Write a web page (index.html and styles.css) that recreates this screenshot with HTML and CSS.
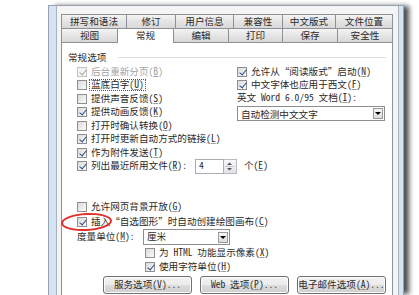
FILE: index.html
```html
<!DOCTYPE html>
<html lang="zh-CN">
<head>
<meta charset="utf-8">
<title>选项</title>
<link rel="stylesheet" href="styles.css">
</head>
<body>
<div class="dialog">
  <div class="body">
    <div class="tabs">
      <div class="tabrow r1">
        <div class="tab">拼写和语法</div>
        <div class="tab">修订</div>
        <div class="tab">用户信息</div>
        <div class="tab">兼容性</div>
        <div class="tab">中文版式</div>
        <div class="tab">文件位置</div>
      </div>
      <div class="tabrow r2">
        <div class="tab">视图</div>
        <div class="tab sel">常规</div>
        <div class="tab">编辑</div>
        <div class="tab">打印</div>
        <div class="tab">保存</div>
        <div class="tab">安全性</div>
      </div>
    </div>
    <div class="panel">
      <div class="group-head"><span>常规选项</span><span class="line"></span></div>
      <div class="opts">
        <div class="col">
          <div class="row"><span class="cb dis on"></span><span class="dis-text">后台重新分页(<u>B</u>)</span></div>
          <div class="row"><span class="cb"></span><span class="focus">蓝底白字(<u>U</u>)</span></div>
          <div class="row"><span class="cb"></span><span>提供声音反馈(<u>S</u>)</span></div>
          <div class="row"><span class="cb on"></span><span>提供动画反馈(<u>K</u>)</span></div>
          <div class="row"><span class="cb"></span><span>打开时确认转换(<u>O</u>)</span></div>
          <div class="row"><span class="cb on"></span><span>打开时更新自动方式的链接(<u>L</u>)</span></div>
          <div class="row"><span class="cb on"></span><span>作为附件发送(<u>T</u>)</span></div>
          <div class="row"><span class="cb on"></span><span>列出最近所用文件(<u>R</u>):</span>
            <span class="spin"><span class="spin-val">4</span><span class="spin-btn"><svg width="11" height="13" viewBox="0 0 11 13"><path d="M3 5 L5.5 2.5 L8 5 Z" fill="#4b5563"/><path d="M3 8 L5.5 10.5 L8 8 Z" fill="#4b5563"/><line x1="1" y1="6.5" x2="10" y2="6.5" stroke="#c9ccd1"/></svg></span></span>
            <span class="unit">个(<u>E</u>)</span>
          </div>
        </div>
        <div class="col">
          <div class="row rr"><span class="cb on"></span><span>允许从“阅读版式”启动(<u>N</u>)</span></div>
          <div class="row rr"><span class="cb on"></span><span>中文字体也应用于西文(<u>F</u>)</span></div>
          <div class="row rr"><span>英文 Word 6.0/95 文档(<u>I</u>):</span></div>
          <div class="select sel-wide"><span>自动检测中文文字</span><span class="arrow"></span></div>
        </div>
      </div>
      <div class="lower">
        <div class="row lr"><span class="cb"></span><span>允许网页背景开放(<u>G</u>)</span></div>
        <div class="row lr mark"><span class="cb on"></span><span>插入“自选图形”时自动创建绘图画布(<u>C</u>)</span><span class="ellipse"></span></div>
        <div class="row unit-row"><span class="unit-label">度量单位(<u>M</u>):</span><span class="select sel-unit"><span>厘米</span><span class="arrow"></span></span></div>
        <div class="row lr sub"><span class="cb"></span><span>为 HTML 功能显示像素(<u>X</u>)</span></div>
        <div class="row lr sub last"><span class="cb on"></span><span>使用字符单位(<u>H</u>)</span></div>
        <div class="buttons">
          <div class="btn">服务选项(<u>V</u>)...</div>
          <div class="btn">Web 选项(<u>P</u>)...</div>
          <div class="btn">电子邮件选项(<u>A</u>)...</div>
        </div>
      </div>
    </div>
  </div>
</div>
</body>
</html>
```

FILE: styles.css
```css
* { box-sizing: border-box; }
html, body { margin: 0; padding: 0; }
body {
  background: #fff;
  font-family: "Noto Sans Mono CJK SC", "Noto Sans CJK SC", "Noto Sans", sans-serif;
  font-size: 9.6px;
  color: #2a2a2a;
  width: 419px;
  height: 295px;
  overflow: hidden;
}
u {
  text-decoration: underline;
  text-decoration-thickness: 0.5px;
  text-decoration-color: #9a9a9a;
  text-underline-offset: 1px;
}

.dialog {
  margin: 5px 0 0 48px;
  width: 356px;
  height: 290px;
  border: 1px solid #98a3b1;
  border-bottom: none;
  background: #d5e4f4;
  padding: 0 4px 0 7px;
  box-shadow: 6px 0 5px -1px rgba(0, 0, 0, 0.7);
}
.body {
  height: 100%;
  background: #f4f4f4;
  border-left: 1px solid #a9b2bd;
  border-right: 1px solid #a9b2bd;
  padding: 8px 5px 0 4px;
}

.tabrow { display: grid; height: 14px; grid-template-rows: 14px; }
.r1 { grid-template-columns: 65px 49px 58px 49px 53px 1fr; }
.r2 { grid-template-columns: 56px 56px 55px 54px 55px 1fr; }
.tab {
  border: 1px solid #8d9096;
  border-right: none;
  border-bottom: none;
  background: linear-gradient(#f4f4f4, #e6e6e6 45%, #d8d8d8);
  display: flex;
  align-items: center;
  justify-content: center;
  line-height: 1;
  white-space: nowrap;
}
.tab:last-child { border-right: 1px solid #8d9096; }
.tab.sel { background: #fff; height: 15px; position: relative; z-index: 1; }

.panel {
  height: 253px;
  border: 1px solid #8d9096;
  border-bottom: none;
  background: #fff;
}

.group-head {
  display: flex;
  align-items: center;
  height: 14px;
  margin-top: 7px;
  padding: 0 6px;
  color: #2a2a2a;
}
.group-head .line { flex: 1; height: 1px; background: #d5dfe5; margin-left: 12px; }

.opts {
  display: grid;
  grid-template-columns: 160px 1fr;
  padding-left: 15px;
  margin-top: 1px;
}
.col { display: flex; flex-direction: column; }
.row { display: flex; align-items: center; height: 13.5px; white-space: nowrap; line-height: 1; }
.row.rr { height: 13px; }

.cb {
  width: 10px;
  height: 10px;
  border: 1px solid #8f8f8f;
  background: linear-gradient(135deg, #dadada, #fbfbfb);
  position: relative;
  flex: none;
  margin-right: 4px;
}
.cb.on::after {
  content: "";
  position: absolute;
  left: 2.5px;
  top: 0;
  width: 3px;
  height: 6px;
  border: solid #2c4a86;
  border-width: 0 1.6px 1.6px 0;
  transform: rotate(40deg);
}
.cb.dis { border-color: #c4c4c4; background: #f4f4f4; }
.cb.dis::after { border-color: #a8a8a8; }
.dis-text { color: #a3a3a3; }
.focus { outline: 1px dotted #555; outline-offset: 0; padding: 0 1px; margin-left: -1px; }

.spin { display: flex; height: 15px; margin-left: 8px; }
.spin-val {
  width: 29px;
  border: 1px solid #abadb3;
  padding-left: 3px;
  display: flex;
  align-items: center;
}
.spin-btn {
  width: 13px;
  border: 1px solid #b8bcc2;
  border-left: none;
  background: linear-gradient(#f7f7f7, #e3e3e3);
  display: flex;
  align-items: center;
  justify-content: center;
}
.unit { margin-left: 7px; }

.select {
  display: flex;
  align-items: center;
  border: 1px solid #8e8e8e;
  background: #fff;
  height: 15px;
  padding-left: 3px;
  white-space: nowrap;
}
.select .arrow {
  margin-left: auto;
  margin-right: 1px;
  width: 10px;
  height: 11px;
  border: 1px solid #9a9a9a;
  background: linear-gradient(#f7f7f7, #dcdcdc);
  display: flex;
  align-items: center;
  justify-content: center;
}
.select .arrow::after {
  content: "";
  border-left: 3px solid transparent;
  border-right: 3px solid transparent;
  border-top: 3px solid #000;
}
.sel-wide { width: 148px; margin-top: 2px; }
.sel-unit { width: 87px; height: 16px; }

.lower { margin-top: 26px; padding-left: 15px; }
.row.lr { height: 15px; }
.mark { position: relative; }
.ellipse {
  position: absolute;
  left: -16px;
  top: -1px;
  width: 51px;
  height: 18px;
  border: 2px solid #e2302a;
  border-radius: 50%;
  transform: rotate(-3deg);
}
.unit-row { height: 16px; }
.unit-label { width: 66px; }
.row.sub { padding-left: 68px; }
.row.sub.last { height: 14px; }

.buttons {
  display: flex;
  justify-content: flex-end;
  gap: 8px;
  padding-right: 6px;
  margin-top: 2px;
}
.btn {
  width: 89px;
  height: 18px;
  border: 1px solid #707070;
  border-radius: 3px;
  background: linear-gradient(#f3f3f3, #ebebeb 50%, #dddddd 51%, #cfcfcf);
  box-shadow: inset 0 0 0 1px #fcfcfc;
  display: flex;
  align-items: center;
  justify-content: center;
  white-space: nowrap;
  line-height: 1;
}
```
